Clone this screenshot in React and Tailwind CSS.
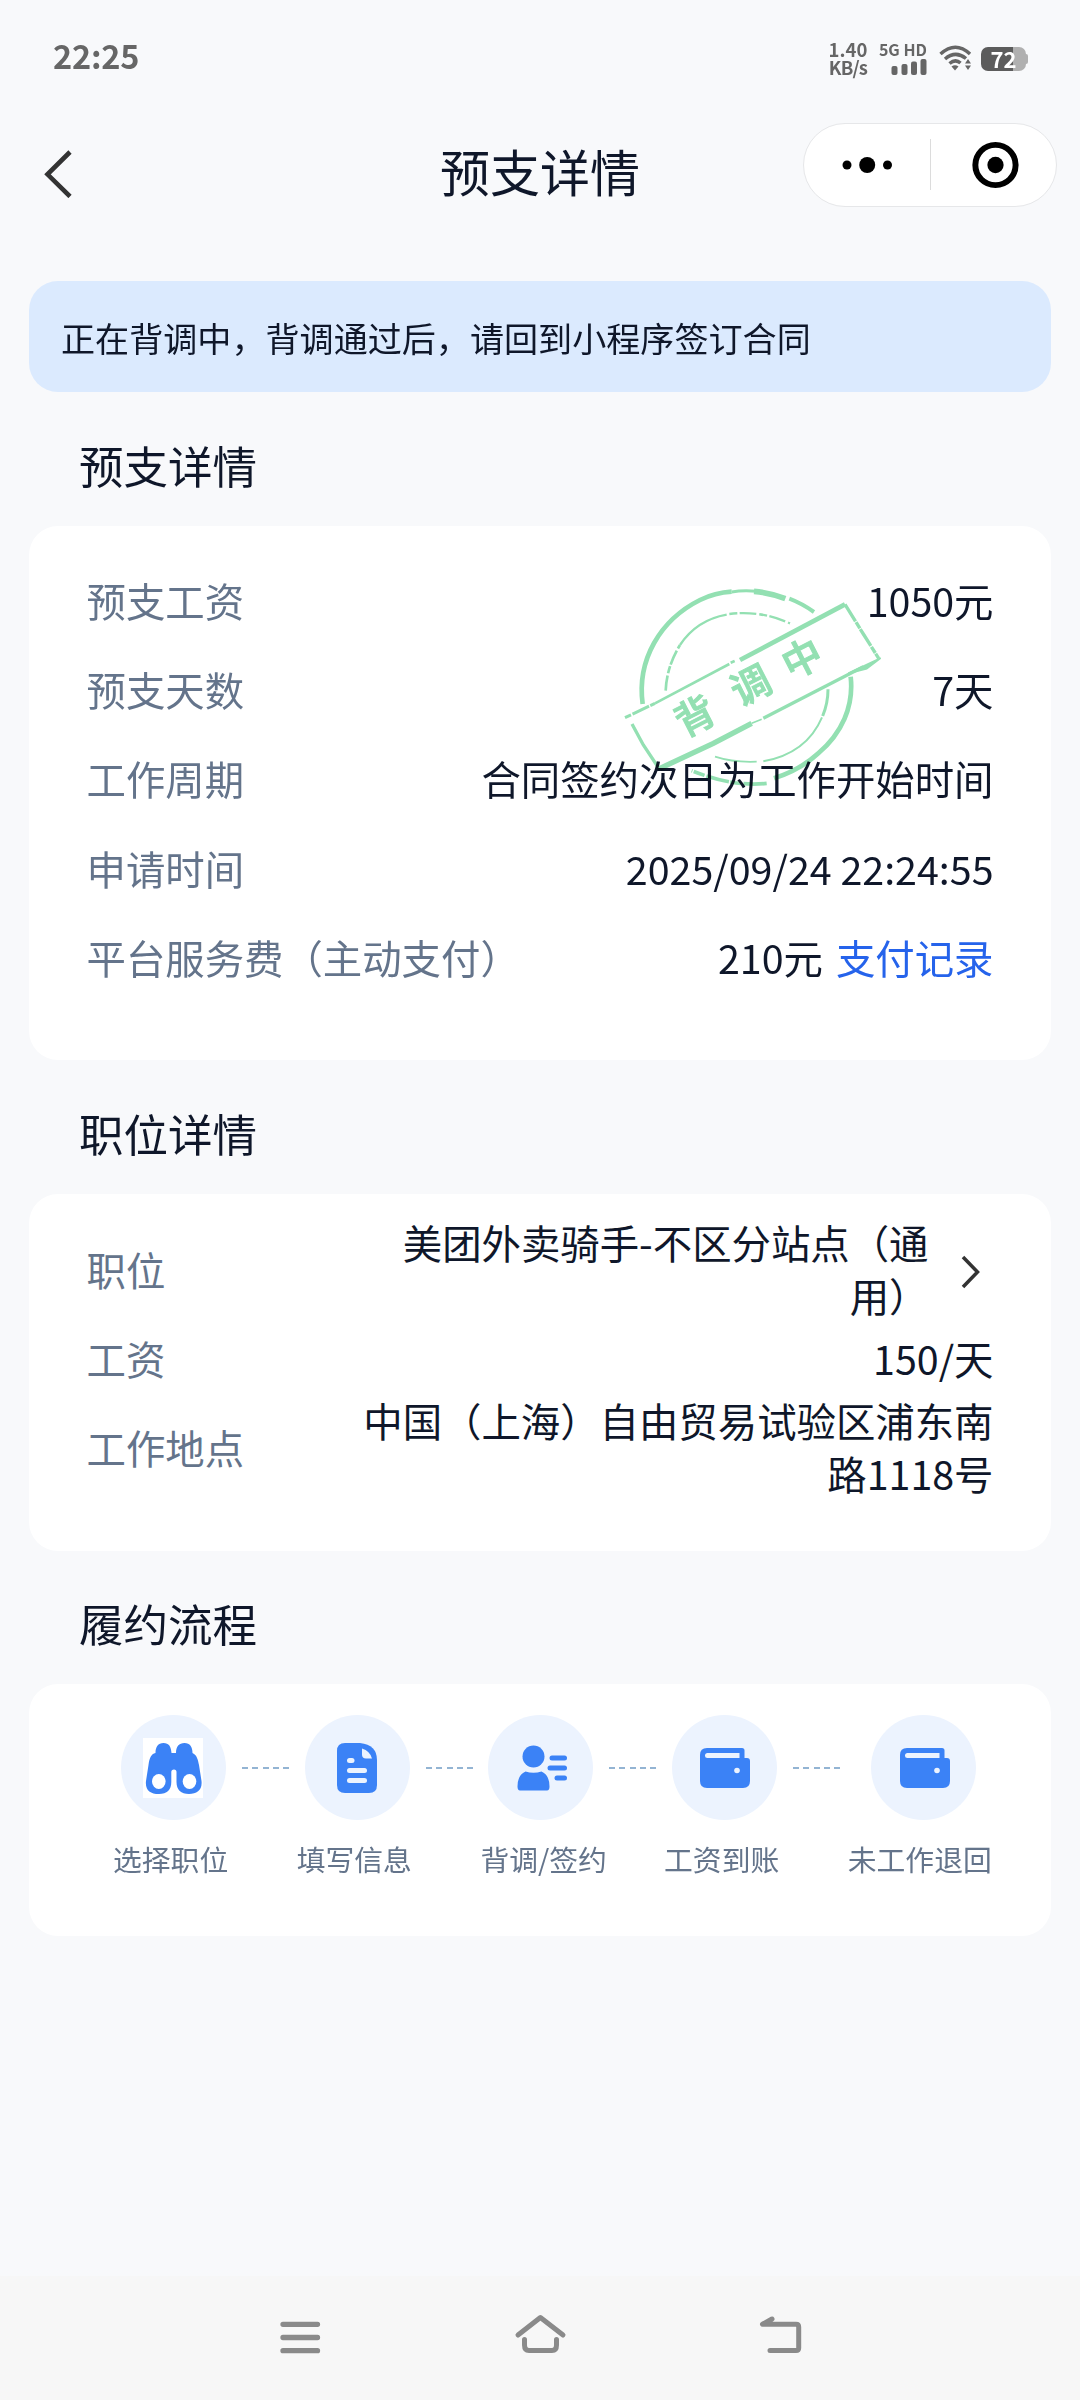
const STAMP = '#93e0b2';

const ADVANCE_ROWS = [
  { label: '预支工资', value: '1050元' },
  { label: '预支天数', value: '7天' },
  { label: '工作周期', value: '合同签约次日为工作开始时间' },
  { label: '申请时间', value: '2025/09/24 22:24:55' },
  { label: '平台服务费（主动支付）', value: '210元', link: '支付记录' },
];

const STEPS = [
  { label: '选择职位', Icon: BinocularsIcon },
  { label: '填写信息', Icon: DocumentIcon },
  { label: '背调/签约', Icon: PersonIcon },
  { label: '工资到账', Icon: WalletIcon },
  { label: '未工作退回', Icon: WalletIcon },
];

function BinocularsIcon() {
  return (
    <svg viewBox="0 0 60 60" className="w-[60px] h-[60px] mr-[2px] bg-white" fill="#3b82f6">
      <path d="M12.500 15 C12.500 9 15 5 20.500 5 C26 5 28 8.500 28.500 15 H33 C33 8.500 36 5 41.500 5 C47 5 49.500 9 49.500 15 C54 17 55 22 56 27 L58.500 43 C59.500 52 54 56 46 56 C38 56 33.500 52 33.500 44 V34 Q33.500 31.500 31 31.500 Q28.300 31.500 28.300 34 V44 C28.300 52 24 56 16 56 C7 56 2 52 3 43 L5.500 27 C6.500 20 8 16 12.500 15 Z" />
      <ellipse cx="15.800" cy="43.500" rx="6.800" ry="7.500" fill="#fff" />
      <ellipse cx="46.500" cy="43.500" rx="6.800" ry="7.500" fill="#fff" />
    </svg>
  );
}

function DocumentIcon() {
  return (
    <svg viewBox="0 0 60 60" className="w-[60px] h-[60px]">
      <path d="M18 5 H33 Q50 7 50 22 V47 Q50 55 42 55 H18 Q10 55 10 47 V13 Q10 5 18 5 Z" fill="#3b82f6" />
      <path d="M35 10.500 Q43 13 45 20.500 H39 Q35 20.500 35 16.500 Z" fill="#ecf3fe" />
      <g stroke="#ecf3fe" strokeWidth="5" strokeLinecap="round">
        <path d="M22.500 22.500 H25" />
        <path d="M22.500 32.500 H37.500" />
        <path d="M22.500 42.500 H37.500" />
      </g>
    </svg>
  );
}

function PersonIcon() {
  return (
    <svg viewBox="0 0 60 60" className="w-[60px] h-[60px]" fill="#3b82f6">
      <circle cx="22.500" cy="18.500" r="11" />
      <path d="M14.500 33.500 Q22.500 36 30.500 33.500 Q38.500 37 38.500 48.500 Q38.500 52.500 36 52.500 H9 Q6.500 52.500 6.500 48.500 Q6.500 37 14.500 33.500 Z" />
      <g stroke="#3b82f6" strokeWidth="5" strokeLinecap="round">
        <path d="M41 20 H53.500" />
        <path d="M39 30 H53.500" />
        <path d="M46 40 H53.500" />
      </g>
    </svg>
  );
}

function WalletIcon() {
  return (
    <svg viewBox="0 0 60 60" className="w-[60px] h-[60px]">
      <path d="M12 10 H47 Q49.500 10 49.500 12.500 V20 H52 Q55 20 55 23 V43 Q55 50 48 50 H12 Q5 50 5 43 V17 Q5 10 12 10 Z" fill="#3b82f6" />
      <path d="M12.500 15 H44.500 V20 H12.500 Q10 20 10 17.500 Q10 15 12.500 15 Z" fill="#ecf3fe" />
      <circle cx="42" cy="32.500" r="2.800" fill="#ecf3fe" />
    </svg>
  );
}

function StatusBar() {
  return (
    <div className="h-[116px] flex items-center justify-between pl-[53px] pr-[52px] text-[#666]">
      <span className="mb-[5px] text-[32.500px] leading-none font-bold tracking-[-0.200px]">22:25</span>
      <div className="flex items-center">
        <div className="w-[40px] mr-[11px] text-[18.500px] leading-[18px] font-bold text-center whitespace-nowrap">
          <div>1.40</div>
          <div className="tracking-[-0.800px]">KB/s</div>
        </div>
        <div className="w-[48px] flex flex-col items-end mr-[12px]">
          <span className="text-[16px] leading-[17px] font-bold whitespace-nowrap">5G HD</span>
          <svg viewBox="0 0 36 17" className="w-[36px] h-[17px]" fill="#666">
            <rect x="0.500" y="8" width="6" height="9" rx="2" />
            <rect x="10.500" y="6" width="6" height="11" rx="2" />
            <rect x="20" y="3.500" width="6" height="13.500" rx="2" />
            <rect x="29.500" y="1" width="6" height="16" rx="2" />
          </svg>
        </div>
        <svg viewBox="0 0 33 26" className="w-[33px] h-[26px] mr-[9px]" fill="none" stroke="#666" strokeWidth="3.500">
          <path d="M1.500 9 Q16.500 -4.500 31 9" />
          <path d="M6 14 Q16.500 5 27 13.500" />
          <path d="M10.500 18.500 Q16.500 13.500 21.500 18" />
          <path d="M12.500 21.500 Q16 19 19.500 21.500 L16 25.500 Z" fill="#666" stroke="none" />
          <path d="M26 18.500 L29 14 L32 18.500 Z M26 20.500 L29 25 L32 20.500 Z" fill="#666" stroke="none" />
        </svg>
        <div className="flex items-center mt-[2px]">
          <div className="w-[45px] h-[24px] rounded-[7px] bg-[linear-gradient(90deg,#5c5c5c_72%,#b0b0b0_72%)] text-white text-[22px] leading-[23px] font-bold text-center">
            72
          </div>
          <div className="w-[2px] h-[10px] rounded-r-sm bg-[#b0b0b0]" />
        </div>
      </div>
    </div>
  );
}

function TopBar() {
  return (
    <header className="h-[116px] grid grid-cols-[1fr_auto_1fr] items-center">
      <svg viewBox="0 0 28 48" className="w-[28px] h-[48px] ml-[43.500px]" fill="none" stroke="#333" strokeWidth="4.600">
        <path d="M26 2 L3.500 24.300 L26 46.500" />
      </svg>
      <h1 className="mb-[9px] text-[50px] leading-none">预支详情</h1>
      <div className="w-[254px] h-[84px] mb-[19px] mr-[23px] justify-self-end rounded-full border border-[#e6e7e9] bg-white flex items-center">
        <svg viewBox="0 0 126 50" className="w-[126px] h-[50px]">
          <circle cx="43" cy="25" r="4.500" />
          <circle cx="63.200" cy="25" r="8" />
          <circle cx="83.500" cy="25" r="4.500" />
        </svg>
        <div className="w-px h-[51px] bg-[#dcdcdc]" />
        <svg viewBox="0 0 126 50" className="flex-1 h-[50px]">
          <circle cx="65" cy="25" r="20.300" fill="none" stroke="#000" strokeWidth="6" />
          <circle cx="65" cy="25" r="8.200" />
        </svg>
      </div>
    </header>
  );
}

function SectionTitle({ children }) {
  return <h2 className="h-[133.500px] pt-[47.500px] pl-[50px] text-[44.500px] leading-[50px]">{children}</h2>;
}

function Card({ children }) {
  return <section className="relative rounded-[29px] bg-white pt-[29.500px] pb-[59.500px] pl-[57.500px] pr-[57.500px]">{children}</section>;
}

function Row({ label, children }) {
  return (
    <div className="h-[89.200px] flex items-center justify-between text-[39.400px] leading-[53px]">
      <span className="shrink-0 text-[#64748b]">{label}</span>
      <div className="text-right">{children}</div>
    </div>
  );
}

function Stamp() {
  return (
    <svg viewBox="0 0 1260 780" className="absolute left-[571px] top-[34.500px] w-[420px] h-[260px] mix-blend-multiply" fill="none" stroke={STAMP}>
      {/* outer ring */}
      <path d="M128 432 C110 300 180 180 300 120 Q345 98 395 95" strokeWidth="14" />
      <path d="M395 96 Q430 90 470 94" strokeWidth="9" />
      <path d="M462 94 Q510 98 556 116" strokeWidth="17" />
      <path d="M568 116 Q605 130 642 156" strokeWidth="12" />
      <path d="M752 350 C762 440 725 520 655 580 Q600 630 522 655" strokeWidth="14" />
      <path d="M500 670 Q400 682 275 632" strokeWidth="11" strokeDasharray="70 6 34 4" />
      {/* inner ring */}
      <path d="M197 392 Q200 320 240 255" strokeWidth="8" strokeDasharray="46 7 22 5" />
      <path d="M240 255 Q290 180 380 164" strokeWidth="7" />
      <path d="M388 162 Q480 150 570 190" strokeWidth="7" strokeDasharray="24 7 50 9" />
      <path d="M684 388 Q684 430 668 468" strokeWidth="9" />
      <path d="M666 472 Q620 580 490 604" strokeWidth="6" />
      <path d="M470 605 Q400 608 345 590" strokeWidth="5" />
      {/* banner */}
      <path d="M75 473 L165 430" strokeWidth="9" strokeDasharray="20 5 55 4" />
      <path d="M165 430 L388 312" strokeWidth="8" />
      <path d="M392 308 L404 303" strokeWidth="8" />
      <path d="M420 300 L735 133" strokeWidth="14" />
      <path d="M735 133 L790 222 L836 295" strokeWidth="10" strokeDasharray="60 3 22 2" />
      <path d="M842 294 L800 326 L745 340 Z" fill={STAMP} strokeWidth="5" />
      <path d="M790 320 L490 475" strokeWidth="10" />
      <path d="M485 478 L455 490" strokeWidth="5" />
      <path d="M455 490 L340 550 L180 625" strokeWidth="16" />
      <path d="M96 492 L130 555 L180 630" strokeWidth="10" />
      <g fill={STAMP} fontSize="118" fontWeight="500" stroke={STAMP} strokeWidth="3" textAnchor="middle">
        <text transform="translate(285 468) rotate(-27)" y="43">背</text>
        <text transform="translate(452 376) rotate(-27)" y="43">调</text>
        <text transform="translate(606 296) rotate(-27)" y="43">中</text>
      </g>
    </svg>
  );
}

function Step({ label, Icon, last }) {
  return (
    <div className={last ? 'w-[145px]' : 'w-[183.700px]'}>
      <div className={last ? 'flex items-center pl-[23px]' : 'flex items-center pl-[8px]'}>
        <div className={`w-[105px] h-[105px] shrink-0 rounded-full bg-[#ecf3fe] flex items-center justify-center ${last ? 'pl-[3px]' : ''}`}>
          <Icon />
        </div>
        {!last && (
          <div className="ml-[16px] w-[48px] h-[2px] bg-[repeating-linear-gradient(90deg,#93b4d3_0_6px,transparent_6px_10.300px)]" />
        )}
      </div>
      <div className="mt-[18px] text-[28.800px] leading-[42px] whitespace-nowrap text-[#64748b]">{label}</div>
    </div>
  );
}

function NavBar() {
  return (
    <nav className="h-[124px] bg-[#f7f7f7] flex justify-center gap-[180px] pt-[31px]">
      <svg viewBox="0 0 60 60" className="w-[60px] h-[60px]" fill="none" stroke="#8a8a8a" strokeWidth="5.300" strokeLinecap="round">
        <path d="M13 17.300 H47.500 M13 30.500 H47.500 M13 43.700 H47.500" />
      </svg>
      <svg viewBox="0 0 60 60" className="w-[60px] h-[60px]" fill="none" stroke="#8a8a8a" strokeWidth="5" strokeLinecap="round" strokeLinejoin="round">
        <path d="M8 28 L30.400 10.500 L53 28" />
        <path d="M14.500 32.500 V38 Q14.500 43.500 19 43.500 H42 Q46.500 43.500 46.500 38 V32.500" />
      </svg>
      <svg viewBox="0 0 60 60" className="w-[60px] h-[60px]" fill="none" stroke="#8a8a8a" strokeWidth="5" strokeLinecap="round" strokeLinejoin="round">
        <path d="M22 12 L12.500 17.300 H46 Q48.700 17.300 48.700 20 V41 Q48.700 43.500 46 43.500 H20" />
      </svg>
    </nav>
  );
}

export default function App() {
  return (
    <div className="w-[1080px] h-[2400px] flex flex-col overflow-hidden bg-[#f8f9fb] text-[#0f172a] font-['Noto_Sans_CJK_SC',sans-serif]">
      <StatusBar />
      <TopBar />
      <main className="flex-1 px-[29px] pt-[49px]">
        <div className="h-[111px] rounded-[29px] bg-[#dbeafe] flex items-center pl-[32px] pt-[3px] text-[34.100px]">
          正在背调中，背调通过后，请回到小程序签订合同
        </div>

        <SectionTitle>预支详情</SectionTitle>
        <Card>
          {ADVANCE_ROWS.map(row => (
            <Row key={row.label} label={row.label}>
              {row.value}
              {row.link && <a className="ml-[13px] text-[#2563eb]">{row.link}</a>}
            </Row>
          ))}
          <Stamp />
        </Card>

        <SectionTitle>职位详情</SectionTitle>
        <Card>
          <Row label="职位">
            <div className="flex items-center">
              <span className="w-[536px]">美团外卖骑手-不区分站点（通用）</span>
              <svg viewBox="0 0 20 34" className="w-[20px] h-[34px] mt-[8px] ml-[32px] mr-[13px]" fill="none" stroke="#333" strokeWidth="3.500">
                <path d="M2 2 L16.500 17 L2 32" />
              </svg>
            </div>
          </Row>
          <Row label="工资">150/天</Row>
          <Row label="工作地点">
            <div className="w-[640px]">中国（上海）自由贸易试验区浦东南路1118号</div>
          </Row>
        </Card>

        <SectionTitle>履约流程</SectionTitle>
        <section className="h-[252px] rounded-[29px] bg-white flex pl-[84px] pt-[31px]">
          {STEPS.map((step, i) => (
            <Step key={step.label} {...step} last={i === STEPS.length - 1} />
          ))}
        </section>
      </main>
      <NavBar />
    </div>
  );
}
